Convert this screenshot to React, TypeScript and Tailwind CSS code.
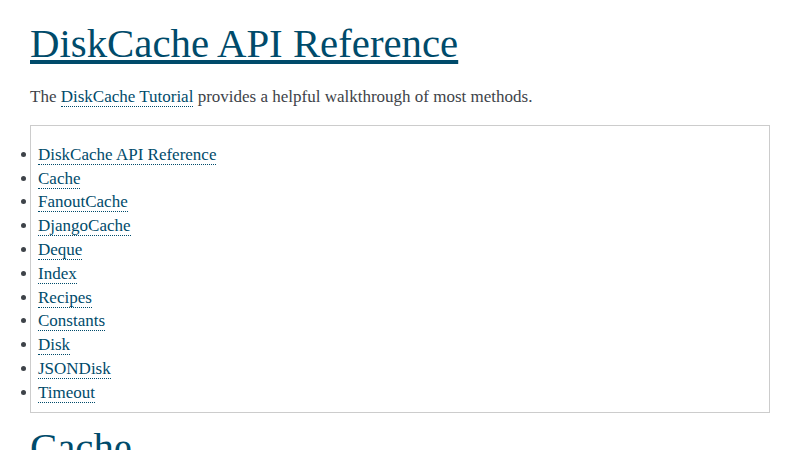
const items = [
  "DiskCache API Reference",
  "Cache",
  "FanoutCache",
  "DjangoCache",
  "Deque",
  "Index",
  "Recipes",
  "Constants",
  "Disk",
  "JSONDisk",
  "Timeout",
];

const RefLink = ({ children }: { children: React.ReactNode }) => (
  <a href="#" className="text-[#004B6B] border-b border-dotted border-[#004B6B] no-underline">
    {children}
  </a>
);

export default function App() {
  return (
    <div className="h-[450px] overflow-hidden bg-white px-[30px] text-[17px] leading-[1.4] text-[#3E4349] font-['Liberation_Serif',serif]">
      <h1 className="mt-[17px] mb-[10px] text-[40.8px] leading-[1.3] font-normal text-[#004B6B]">
        <a href="#" className="underline decoration-[4px] underline-offset-[3px] text-[#004B6B]">
          DiskCache API Reference
        </a>
      </h1>
      <p className="mt-[15px] mb-[16px]">
        The <RefLink>DiskCache Tutorial</RefLink> provides a helpful walkthrough of most methods.
      </p>
      <div className="border border-[#CCC] px-[7px] pt-[7px] pb-[7px]">
        <ul className="mt-[10px] list-disc pl-0 marker:text-[#3E4349]">
          {items.map((t) => (
            <li key={t} className="leading-[23.8px]">
              <RefLink>{t}</RefLink>
            </li>
          ))}
        </ul>
      </div>
      <h2 className="mt-[8px] text-[40.8px] leading-[1.3] font-normal text-[#004B6B]">Cache</h2>
    </div>
  );
}
